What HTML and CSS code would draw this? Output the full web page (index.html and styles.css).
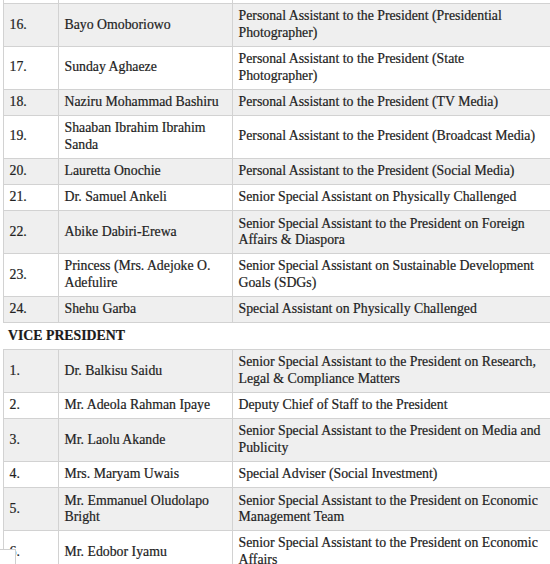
FILE: index.html
```html
<!DOCTYPE html>
<html>
<head>
<meta charset="utf-8">
<link rel="stylesheet" href="styles.css">
</head>
<body>
<div class="page">
  <table class="list first">
    <colgroup><col class="c-num"><col class="c-name"><col class="c-role"></colgroup>
    <tbody>
      <tr class="ghost"><td>&nbsp;</td><td>&nbsp;</td><td>&nbsp;</td></tr>
      <tr class="alt"><td>16.</td><td>Bayo Omoboriowo</td><td>Personal Assistant to the President (Presidential<br>Photographer)</td></tr>
      <tr><td>17.</td><td>Sunday Aghaeze</td><td>Personal Assistant to the President (State<br>Photographer)</td></tr>
      <tr class="alt"><td>18.</td><td>Naziru Mohammad Bashiru</td><td>Personal Assistant to the President (TV Media)</td></tr>
      <tr><td>19.</td><td>Shaaban Ibrahim Ibrahim<br>Sanda</td><td>Personal Assistant to the President (Broadcast Media)</td></tr>
      <tr class="alt"><td>20.</td><td>Lauretta Onochie</td><td>Personal Assistant to the President (Social Media)</td></tr>
      <tr><td>21.</td><td>Dr. Samuel Ankeli</td><td>Senior Special Assistant on Physically Challenged</td></tr>
      <tr class="alt"><td>22.</td><td>Abike Dabiri-Erewa</td><td>Senior Special Assistant to the President on Foreign<br>Affairs &amp; Diaspora</td></tr>
      <tr><td>23.</td><td>Princess (Mrs. Adejoke O.<br>Adefulire</td><td>Senior Special Assistant on Sustainable Development<br>Goals (SDGs)</td></tr>
      <tr class="alt"><td>24.</td><td>Shehu Garba</td><td>Special Assistant on Physically Challenged</td></tr>
    </tbody>
  </table>
  <div class="section">VICE PRESIDENT</div>
  <table class="list">
    <colgroup><col class="c-num"><col class="c-name"><col class="c-role"></colgroup>
    <tbody>
      <tr class="alt"><td>1.</td><td>Dr. Balkisu Saidu</td><td>Senior Special Assistant to the President on Research,<br>Legal &amp; Compliance Matters</td></tr>
      <tr><td>2.</td><td>Mr. Adeola Rahman Ipaye</td><td>Deputy Chief of Staff to the President</td></tr>
      <tr class="alt"><td>3.</td><td>Mr. Laolu Akande</td><td>Senior Special Assistant to the President on Media and<br>Publicity</td></tr>
      <tr><td>4.</td><td>Mrs. Maryam Uwais</td><td>Special Adviser (Social Investment)</td></tr>
      <tr class="alt"><td>5.</td><td>Mr. Emmanuel Oludolapo<br>Bright</td><td>Senior Special Assistant to the President on Economic<br>Management Team</td></tr>
      <tr><td>6.</td><td>Mr. Edobor Iyamu</td><td>Senior Special Assistant to the President on Economic<br>Affairs</td></tr>
    </tbody>
  </table>
</div>
<div class="corner"></div>
</body>
</html>
```

FILE: styles.css
```css
html, body {
  margin: 0;
  padding: 0;
  background: #ffffff;
}
body {
  font-family: "Liberation Serif", "Times New Roman", serif;
  font-size: 13.8px;
  color: #222222;
  -webkit-text-stroke: 0.2px #222222;
  overflow: hidden;
}
.page {
  padding-left: 3px;
  width: 547px;
}
.list {
  border-collapse: collapse;
  table-layout: fixed;
  width: 547px;
}
.first {
  margin-top: -23.3px;
}
.c-num { width: 55px; }
.c-name { width: 174px; }
.c-role { width: 318px; }
.list td {
  border: 1px solid #d2d2d2;
  padding: 4.4px 3px 4.4px 5.5px;
  line-height: 16.5px;
  vertical-align: middle;
  text-align: left;
}
.list tr.alt td {
  background: #efefef;
}
.section {
  font-weight: bold;
  line-height: 16.5px;
  padding: 5px 5px 4.5px;
  color: #1a1a1a;
}
.corner {
  position: fixed;
  left: 0;
  top: 549px;
  width: 16px;
  height: 20px;
  background: #ffffff;
  border: 1px solid #cfcfcf;
  border-left: none;
  box-sizing: border-box;
}
```
